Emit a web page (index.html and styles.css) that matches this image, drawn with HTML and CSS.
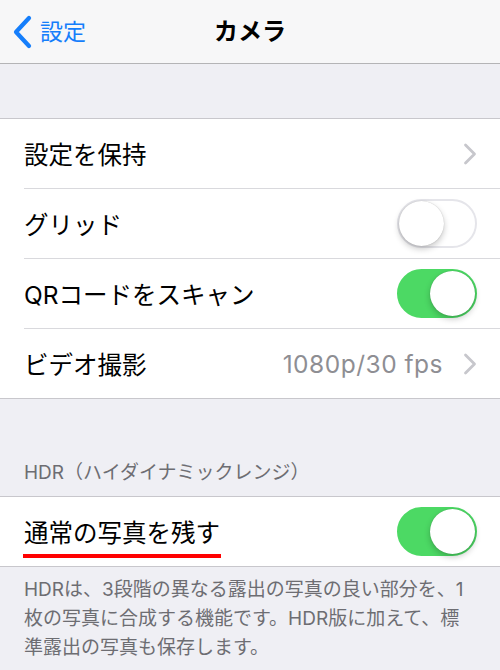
FILE: index.html
```html
<!DOCTYPE html>
<html lang="ja">
<head>
<meta charset="utf-8">
<link rel="stylesheet" href="styles.css">
</head>
<body>
<header class="nav">
  <div class="back">
    <svg class="back-icon" width="22" height="34" viewBox="0 0 22 34"><path d="M17 3 L4 17 L17 31" fill="none" stroke="#157efb" stroke-width="4.2" stroke-linecap="round" stroke-linejoin="round"/></svg>
    <span class="back-label">設定</span>
  </div>
  <div class="title">カメラ</div>
</header>
<div class="gap-top"></div>
<section class="group">
  <div class="row">
    <span class="label">設定を保持</span>
    <svg class="chev" width="14" height="22" viewBox="0 0 14 22"><path d="M2.5 2 L11.5 11 L2.5 20" fill="none" stroke="#c7c7cc" stroke-width="2.8" stroke-linecap="round" stroke-linejoin="round"/></svg>
  </div>
  <div class="row">
    <span class="label">グリッド</span>
    <span class="toggle off"><span class="knob"></span></span>
  </div>
  <div class="row">
    <span class="label">QRコードをスキャン</span>
    <span class="toggle on"><span class="knob"></span></span>
  </div>
  <div class="row last">
    <span class="label">ビデオ撮影</span>
    <span class="value">1080p/30 fps</span>
    <svg class="chev" width="14" height="22" viewBox="0 0 14 22"><path d="M2.5 2 L11.5 11 L2.5 20" fill="none" stroke="#c7c7cc" stroke-width="2.8" stroke-linecap="round" stroke-linejoin="round"/></svg>
  </div>
</section>
<div class="section-header">HDR（ハイダイナミックレンジ）</div>
<section class="group">
  <div class="row last">
    <span class="label mark">通常の写真を残す</span>
    <span class="toggle on"><span class="knob"></span></span>
  </div>
</section>
<p class="footer">HDRは、3段階の異なる露出の写真の良い部分を、1枚の写真に合成する機能です。HDR版に加えて、標準露出の写真も保存します。</p>
</body>
</html>
```

FILE: styles.css
```css
html, body {
  margin: 0;
  padding: 0;
}
body {
  width: 500px;
  height: 670px;
  overflow: hidden;
  background: #efeff4;
  font-family: Inter, "Noto Sans CJK JP", sans-serif;
  font-weight: 400;
  color: #000;
}
.nav {
  height: 63px;
  border-bottom: 1px solid #b4b4b6;
  background: #f7f7f8;
  display: flex;
  align-items: center;
  position: relative;
}
.back {
  display: flex;
  align-items: center;
  padding-left: 12px;
  gap: 6px;
  color: #157efb;
}
.back-icon {
  display: block;
}
.back-label {
  font-size: 23px;
  line-height: 30px;
}
.title {
  position: absolute;
  left: 0;
  right: 0;
  text-align: center;
  font-size: 24px;
  font-weight: 700;
  line-height: 30px;
  pointer-events: none;
}
.gap-top {
  height: 54px;
}
.group {
  background: #fff;
  border-top: 1px solid #c8c7cc;
  border-bottom: 1px solid #c8c7cc;
}
.row {
  height: 70px;
  margin-left: 24px;
  padding-right: 23px;
  box-sizing: border-box;
  display: flex;
  align-items: center;
  border-bottom: 1px solid #d9d9dd;
}
.row.last {
  border-bottom: none;
  height: 69px;
}
.label {
  font-size: 24.5px;
  flex: 1;
}
.value {
  font-size: 24.5px;
  letter-spacing: 0.5px;
  color: #8e8e93;
  margin-right: 20px;
}
.chev {
  display: block;
}
.toggle {
  width: 80px;
  height: 49px;
  border-radius: 25px;
  box-sizing: border-box;
  position: relative;
  display: block;
}
.toggle.off {
  background: #fff;
  border: 2px solid #e5e5ea;
}
.toggle.on {
  background: #4cd964;
  border: 2px solid #4cd964;
}
.knob {
  position: absolute;
  top: 0;
  width: 45px;
  height: 45px;
  border-radius: 50%;
  background: #fff;
  box-shadow: 0 3px 6px rgba(0,0,0,0.22), 0 0 1px rgba(0,0,0,0.25);
}
.toggle.off .knob {
  left: 0;
}
.toggle.on .knob {
  right: 0;
}
.mark {
  flex: 0 0 auto;
  position: relative;
  margin-right: auto;
}
.mark::after {
  content: "";
  position: absolute;
  left: -1px;
  right: -1px;
  bottom: -9px;
  height: 4px;
  background: #ff0000;
}
.section-header {
  height: 97px;
  box-sizing: border-box;
  display: flex;
  align-items: flex-end;
  padding: 0 24px 10px;
  font-size: 19px;
  line-height: 26px;
  color: #6d6d72;
}
.footer {
  margin: 0;
  padding: 8px 24px 0 24px;
  font-size: 19px;
  line-height: 29px;
  color: #6d6d72;
}
```
